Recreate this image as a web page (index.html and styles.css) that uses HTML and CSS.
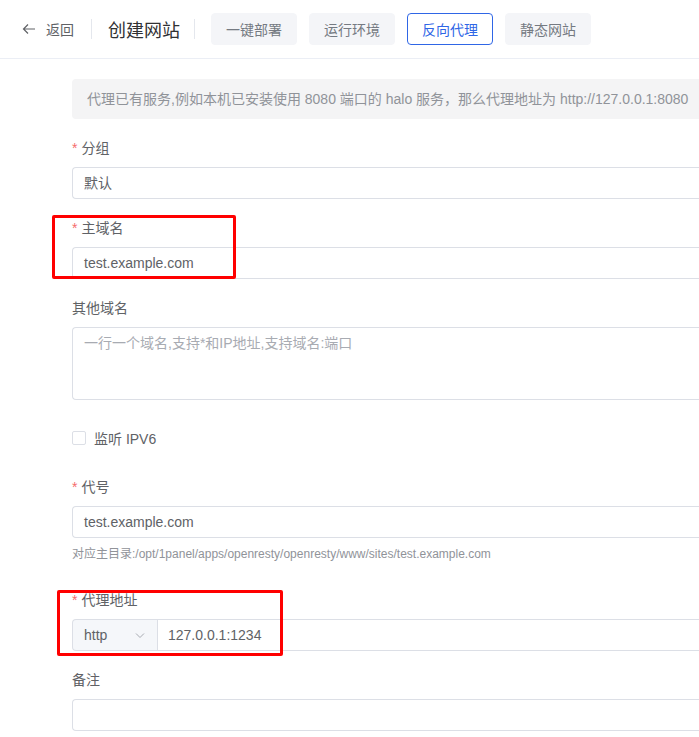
FILE: index.html
```html
<!DOCTYPE html>
<html lang="zh">
<head>
    <meta charset="UTF-8">
    <meta name="viewport" content="width=device-width, initial-scale=1.0">
    <title>创建网站</title>
    <link rel="stylesheet" href="styles.css">
</head>
<body>
    <div class="header">
        <span class="back">
            <svg width="14" height="14" viewBox="0 0 14 14"><path d="M13 7H1.5M6 2.5L1.5 7L6 11.5" fill="none" stroke="#606266" stroke-width="1.2"/></svg>
            返回
        </span>
        <span class="divider"></span>
        <span class="title">创建网站</span>
        <span class="divider"></span>
        <div class="tabs">
            <button class="tab">一键部署</button>
            <button class="tab">运行环境</button>
            <button class="tab active">反向代理</button>
            <button class="tab">静态网站</button>
        </div>
    </div>

    <div class="form">
        <div class="alert">代理已有服务,例如本机已安装使用 8080 端口的 halo 服务，那么代理地址为 http://127.0.0.1:8080</div>

        <div class="item">
            <div class="label"><i>*</i>分组</div>
            <div class="input">默认</div>
        </div>
        <div class="item">
            <div class="label"><i>*</i>主域名</div>
            <div class="input">test.example.com</div>
        </div>
        <div class="item">
            <div class="label">其他域名</div>
            <div class="input textarea placeholder">一行一个域名,支持*和IP地址,支持域名:端口</div>
        </div>
        <div class="item check-item">
            <span class="checkbox"></span>
            <span>监听 IPV6</span>
        </div>
        <div class="item">
            <div class="label"><i>*</i>代号</div>
            <div class="input">test.example.com</div>
            <div class="tip">对应主目录:/opt/1panel/apps/openresty/openresty/www/sites/test.example.com</div>
        </div>
        <div class="item">
            <div class="label"><i>*</i>代理地址</div>
            <div class="group">
                <div class="select">
                    http
                    <svg width="12" height="12" viewBox="0 0 12 12"><path d="M2 4.5L6 8.5L10 4.5" fill="none" stroke="#a8abb2" stroke-width="1"/></svg>
                </div>
                <div class="input">127.0.0.1:1234</div>
            </div>
        </div>
        <div class="item">
            <div class="label">备注</div>
            <div class="input"></div>
        </div>
    </div>

    <div class="mark mark1"></div>
    <div class="mark mark2"></div>
</body>
</html>
```

FILE: styles.css
```css
body{
    margin: 0;
    padding: 0;
    background: #fff;
    font-family: "Liberation Sans", "Noto Sans CJK SC", sans-serif;
    font-size: 14px;
    color: #606266;
    overflow: hidden;
}
.header{
    height: 58px;
    display: flex;
    align-items: center;
    padding-left: 22px;
    border-bottom: 1px solid #ebeef5;
}
.back{
    display: flex;
    align-items: center;
    gap: 10px;
    color: #606266;
}
.divider{
    width: 1px;
    height: 20px;
    background: #e4e7ed;
    margin: 0 16px 0 17px;
}
.title{
    font-size: 18px;
    color: #303133;
}
.title + .divider{
    margin-left: 14px;
}
.tabs{
    display: flex;
    gap: 12px;
}
.tab{
    height: 32px;
    padding: 0 14px;
    border: 1px solid #f4f5f8;
    border-radius: 4px;
    background: #f4f5f8;
    font-family: inherit;
    font-size: 14px;
    color: #757a82;
}
.tab.active{
    background: #fff;
    border-color: #2f66e6;
    color: #2f66e6;
}
/* 表单右侧被截图裁掉 所以右边不画边框 */
.form{
    margin: 20px 0 0 72px;
}
.alert{
    height: 40px;
    line-height: 40px;
    padding-left: 15px;
    background: #f4f4f5;
    border-radius: 4px 0 0 4px;
    color: #909399;
    margin-bottom: 18px;
    white-space: nowrap;
    overflow: hidden;
}
.item{
    margin-bottom: 18px;
}
.label{
    height: 22px;
    line-height: 22px;
    margin-bottom: 8px;
    color: #606266;
}
.label i{
    font-style: normal;
    color: #f56c6c;
    margin-right: 4px;
}
.input{
    height: 30px;
    line-height: 30px;
    padding: 0 11px;
    border: 1px solid #dcdfe6;
    border-right: none;
    border-radius: 4px 0 0 4px;
    color: #606266;
}
.textarea{
    height: 63px;
    line-height: 22px;
    padding-top: 4px;
    padding-bottom: 4px;
}
.placeholder{
    color: #a8abb2;
}
.check-item{
    display: flex;
    align-items: center;
    gap: 8px;
    height: 32px;
    margin-top: 22px;
    margin-bottom: 22px;
}
.checkbox{
    width: 12px;
    height: 12px;
    border: 1px solid #dcdfe6;
    border-radius: 2px;
}
.tip{
    font-size: 12px;
    line-height: 20px;
    margin-top: 6px;
    margin-bottom: 25px;
    color: #909399;
}
.group{
    display: flex;
}
.select{
    width: 62px;
    height: 30px;
    padding: 0 11px;
    display: flex;
    align-items: center;
    justify-content: space-between;
    background: #f5f7fa;
    border: 1px solid #dcdfe6;
    border-radius: 4px 0 0 4px;
    border-right: none;
    color: #606266;
}
.group .input{
    flex: 1;
    border-left: 1px solid #dcdfe6;
    border-radius: 0;
    padding-left: 10px;
}
/* 截图上的红框标注 */
.mark{
    position: absolute;
    border: 3px solid #ff0000;
    border-radius: 2px;
}
.mark1{
    left: 52px;
    top: 215px;
    width: 178px;
    height: 58px;
}
.mark2{
    left: 57px;
    top: 590px;
    width: 220px;
    height: 60px;
}
```
